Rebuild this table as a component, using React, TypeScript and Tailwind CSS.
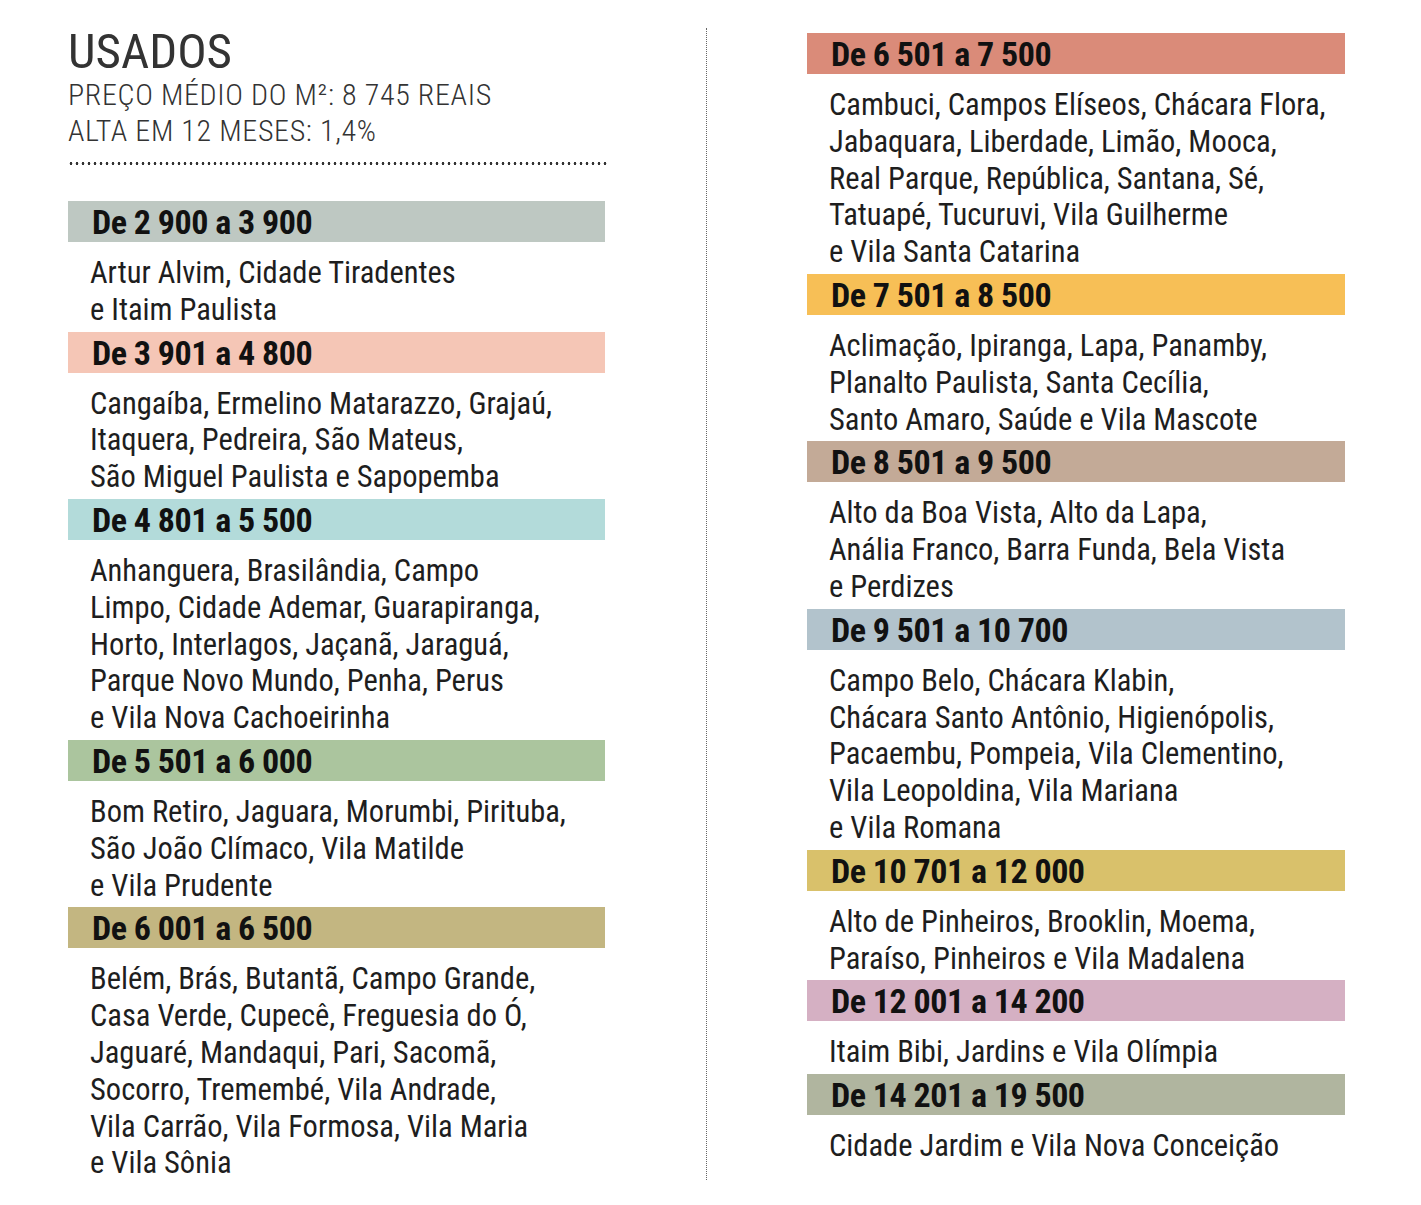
type Group = {
  label: string;
  color: string;
  lines: string[];
};

const left: Group[] = [
  {
    label: "De 2 900 a 3 900",
    color: "bg-[#bec8c2]",
    lines: ["Artur Alvim, Cidade Tiradentes", "e Itaim Paulista"],
  },
  {
    label: "De 3 901 a 4 800",
    color: "bg-[#f5c6b6]",
    lines: [
      "Cangaíba, Ermelino Matarazzo, Grajaú,",
      "Itaquera, Pedreira, São Mateus,",
      "São Miguel Paulista e Sapopemba",
    ],
  },
  {
    label: "De 4 801 a 5 500",
    color: "bg-[#b3dbda]",
    lines: [
      "Anhanguera, Brasilândia, Campo",
      "Limpo, Cidade Ademar, Guarapiranga,",
      "Horto, Interlagos, Jaçanã, Jaraguá,",
      "Parque Novo Mundo, Penha, Perus",
      "e Vila Nova Cachoeirinha",
    ],
  },
  {
    label: "De 5 501 a 6 000",
    color: "bg-[#abc59e]",
    lines: [
      "Bom Retiro, Jaguara, Morumbi, Pirituba,",
      "São João Clímaco, Vila Matilde",
      "e Vila Prudente",
    ],
  },
  {
    label: "De 6 001 a 6 500",
    color: "bg-[#c3b681]",
    lines: [
      "Belém, Brás, Butantã, Campo Grande,",
      "Casa Verde, Cupecê, Freguesia do Ó,",
      "Jaguaré, Mandaqui, Pari, Sacomã,",
      "Socorro, Tremembé, Vila Andrade,",
      "Vila Carrão, Vila Formosa, Vila Maria",
      "e Vila Sônia",
    ],
  },
];

const right: Group[] = [
  {
    label: "De 6 501 a 7 500",
    color: "bg-[#da8b79]",
    lines: [
      "Cambuci, Campos Elíseos, Chácara Flora,",
      "Jabaquara, Liberdade, Limão, Mooca,",
      "Real Parque, República, Santana, Sé,",
      "Tatuapé, Tucuruvi, Vila Guilherme",
      "e Vila Santa Catarina",
    ],
  },
  {
    label: "De 7 501 a 8 500",
    color: "bg-[#f7bf56]",
    lines: [
      "Aclimação, Ipiranga, Lapa, Panamby,",
      "Planalto Paulista, Santa Cecília,",
      "Santo Amaro, Saúde e Vila Mascote",
    ],
  },
  {
    label: "De 8 501 a 9 500",
    color: "bg-[#c3aa97]",
    lines: [
      "Alto da Boa Vista, Alto da Lapa,",
      "Anália Franco, Barra Funda, Bela Vista",
      "e Perdizes",
    ],
  },
  {
    label: "De 9 501 a 10 700",
    color: "bg-[#b2c3cc]",
    lines: [
      "Campo Belo, Chácara Klabin,",
      "Chácara Santo Antônio, Higienópolis,",
      "Pacaembu, Pompeia, Vila Clementino,",
      "Vila Leopoldina, Vila Mariana",
      "e Vila Romana",
    ],
  },
  {
    label: "De 10 701 a 12 000",
    color: "bg-[#d9c16b]",
    lines: [
      "Alto de Pinheiros, Brooklin, Moema,",
      "Paraíso, Pinheiros e Vila Madalena",
    ],
  },
  {
    label: "De 12 001 a 14 200",
    color: "bg-[#d5b0c3]",
    lines: ["Itaim Bibi, Jardins e Vila Olímpia"],
  },
  {
    label: "De 14 201 a 19 500",
    color: "bg-[#b0b59f]",
    lines: ["Cidade Jardim e Vila Nova Conceição"],
  },
];

const PriceGroup = ({ label, color, lines }: Group) => {
  return (
    <div>
      <div
        className={`${color} h-[41px] pl-[24px] pt-[1px] text-[34px] leading-[40px] font-bold tracking-[-0.5px] text-[#111]`}
      >
        {label}
      </div>
      <div className="pl-[22px] pt-[13px] pb-[3px] text-[30.5px] leading-[36.8px] text-[#1e1e1e] whitespace-nowrap">
        {lines.map((line) => (
          <div key={line}>{line}</div>
        ))}
      </div>
    </div>
  );
};

export default function App() {
  return (
    <div className="flex w-[1421px] h-[1205px] bg-white font-['Roboto',sans-serif] [font-stretch:75%]">
      <div className="ml-[68px] mt-[30px] w-[540px]">
        <h1 className="text-[49px] leading-[44px] text-[#333]">USADOS</h1>
        <p className="mt-[3px] text-[30px] leading-[36px] font-light tracking-[0.65px] text-[#333]">
          PREÇO MÉDIO DO M²: 8 745 REAIS
        </p>
        <p className="text-[30px] leading-[36px] font-light tracking-[0.65px] text-[#333]">
          ALTA EM 12 MESES: 1,4%
        </p>
        <div className="mt-[13px] h-[3px] bg-[radial-gradient(circle,#333_1.2px,transparent_1.6px)] bg-[length:6px_3px]" />
        <div className="mt-[36px] w-[537px]">
          {left.map((g) => (
            <PriceGroup key={g.label} {...g} />
          ))}
        </div>
      </div>
      <div className="ml-[98px] mt-[28px] h-[1152px] border-l border-dotted border-[#666]" />
      <div className="ml-[100px] mt-[33px] w-[538px]">
        {right.map((g) => (
          <PriceGroup key={g.label} {...g} />
        ))}
      </div>
    </div>
  );
}
